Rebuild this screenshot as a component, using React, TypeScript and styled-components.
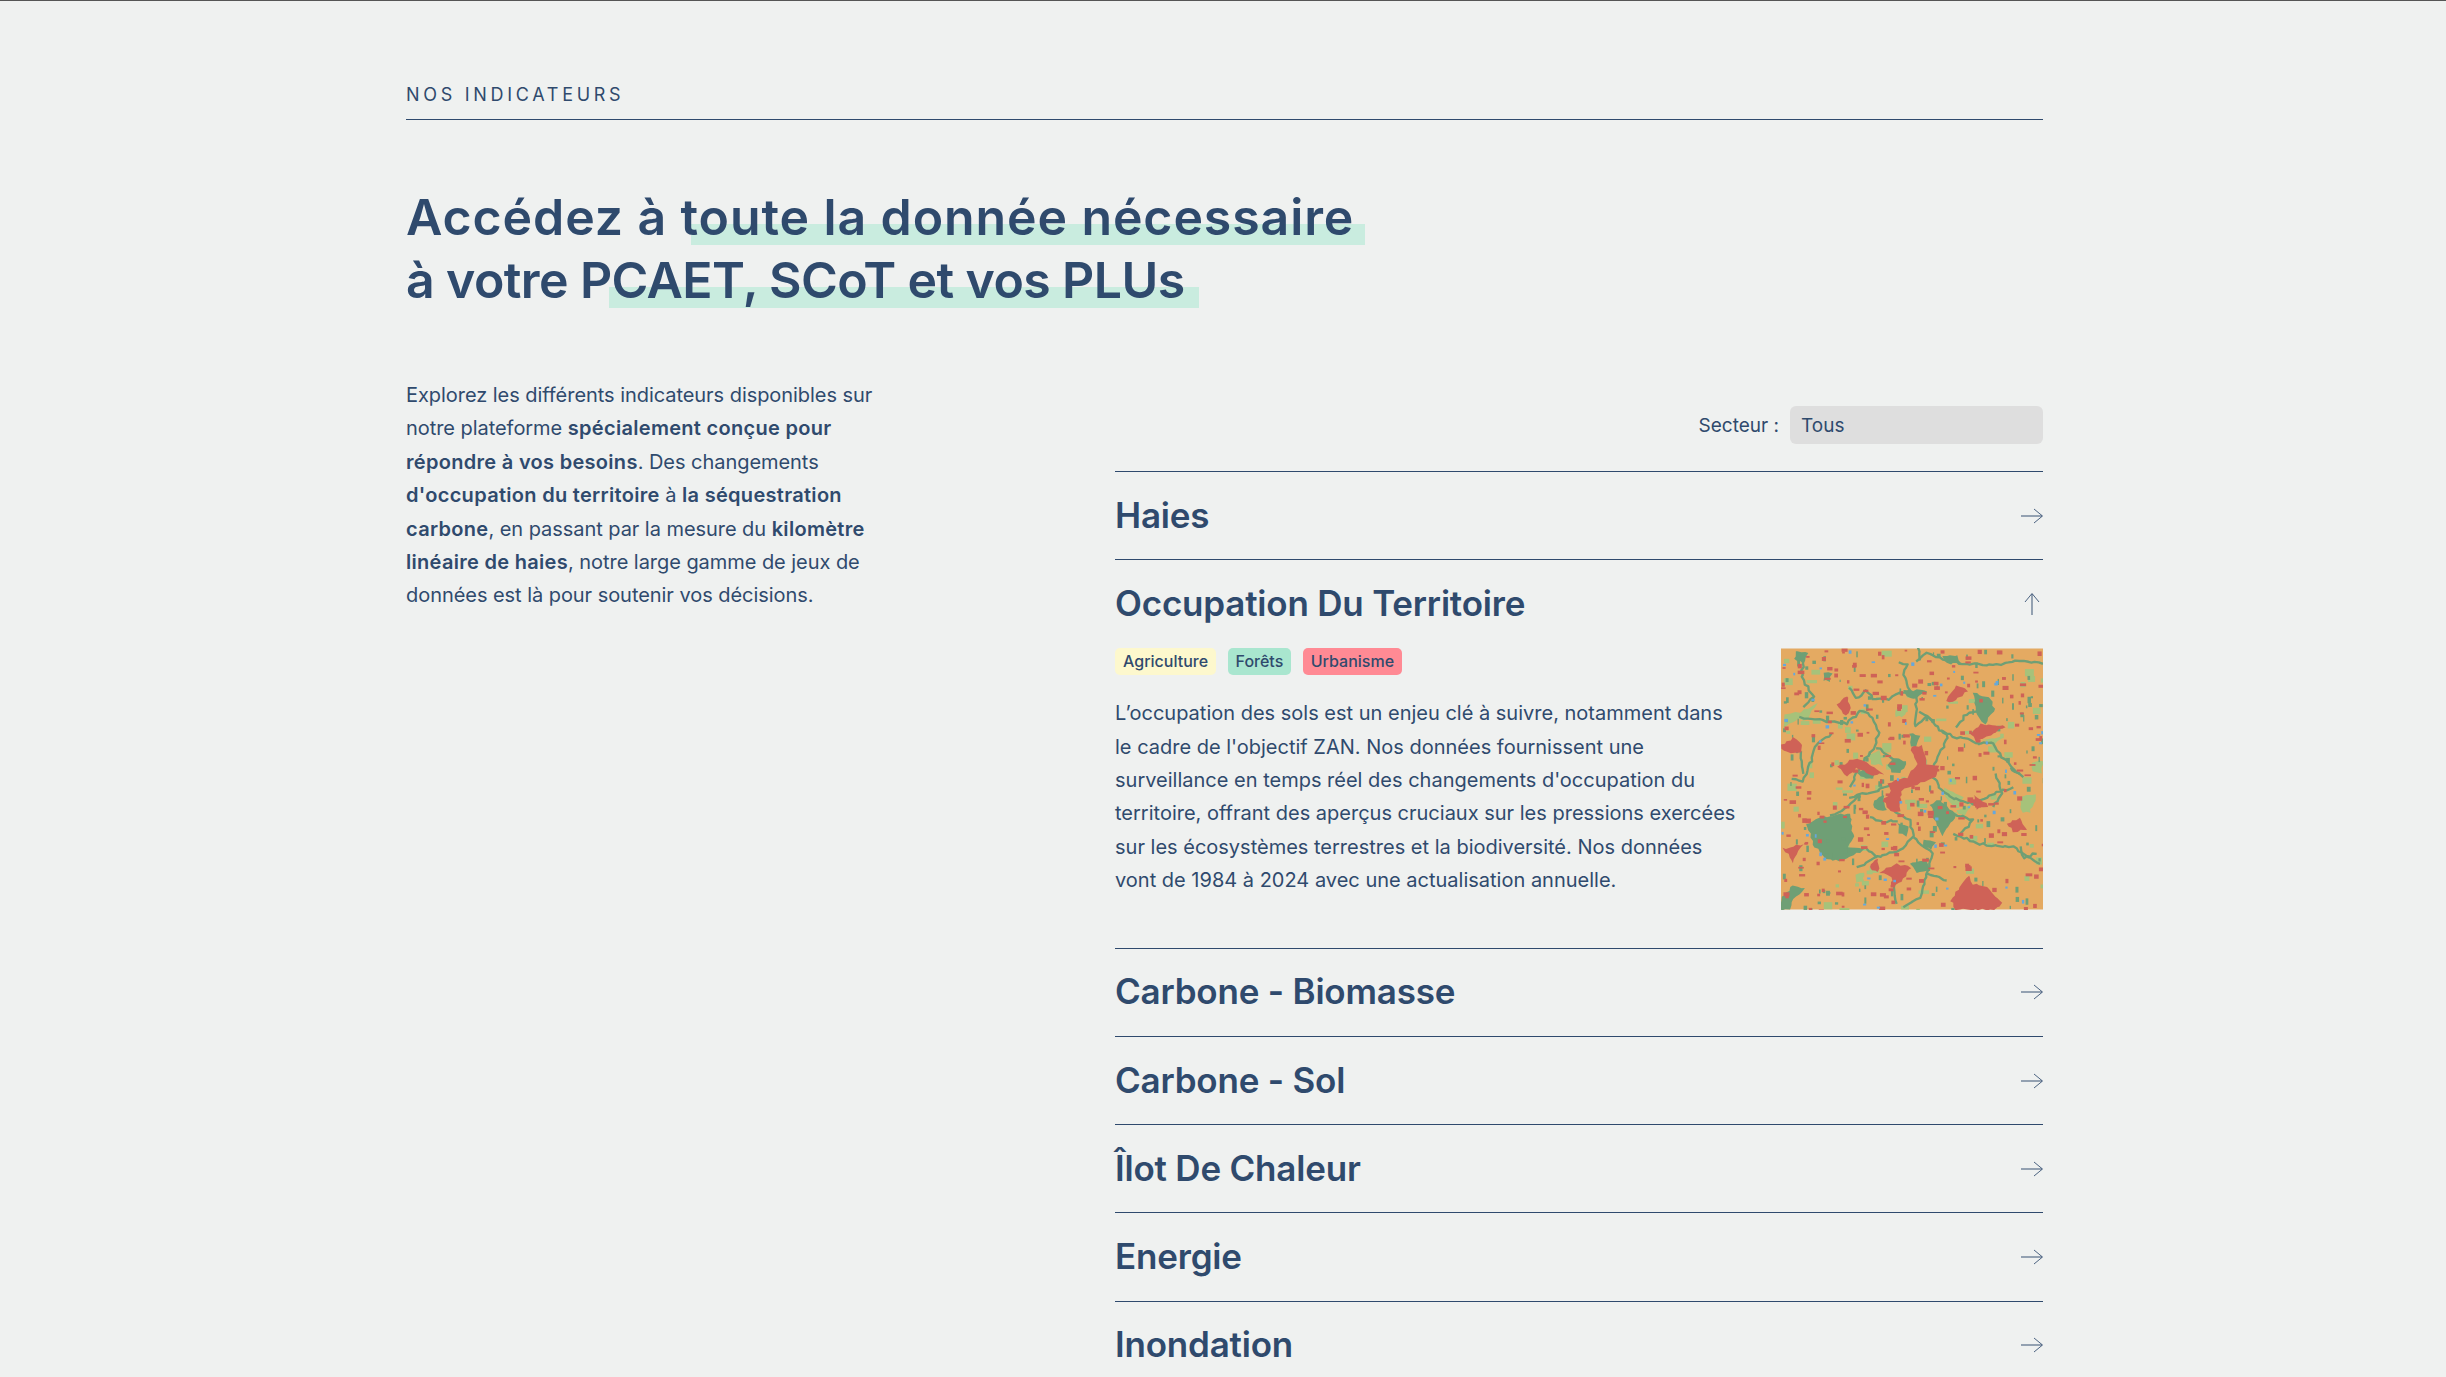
import styled, { createGlobalStyle } from "styled-components";

const ink = "#2f4a6d";

const GlobalStyle = createGlobalStyle`
  html, body {
    margin: 0;
    height: 1377px;
    overflow: hidden;
    background: #eff1f0;
  }
  body {
    font-family: Inter, "Liberation Sans", sans-serif;
    color: ${ink};
  }
`;

const Page = styled.main`
  border-top: 1px solid #555;
  padding: 0 403px 0 406px;
`;

const Eyebrow = styled.div`
  padding-top: 83px;
  padding-bottom: 13px;
  border-bottom: 1px solid ${ink};
  font-size: 18px;
  line-height: 22px;
  letter-spacing: 3.7px;
  text-transform: uppercase;
`;

const Heading = styled.h1`
  margin: 66px 0 0;
  font-size: 50px;
  line-height: 63px;
  font-weight: 600;
  isolation: isolate;
`;

const HeadingLine = styled.span<{ $from: number; $mark: number; $track: number }>`
  display: table;
  position: relative;
  white-space: nowrap;
  letter-spacing: ${(p) => p.$track}px;

  &::after {
    content: "";
    position: absolute;
    z-index: -1;
    left: ${(p) => p.$from}px;
    width: ${(p) => p.$mark}px;
    top: 38px;
    height: 21px;
    background: #c9ecdf;
  }
`;

const Columns = styled.div`
  display: grid;
  grid-template-columns: 709px 1fr;
  margin-top: 66px;
`;

const Intro = styled.p`
  margin: 0;
  padding-top: 1px;
  font-size: 20px;
  line-height: 33.4px;
  letter-spacing: -0.05px;
  white-space: nowrap;

  strong {
    font-weight: 600;
    letter-spacing: 0.3px;
  }
`;

const Filter = styled.div`
  display: flex;
  justify-content: flex-end;
  align-items: center;
  gap: 11px;
  padding-top: 28px;
  padding-bottom: 27px;
  font-size: 19px;
`;

const Select = styled.select`
  appearance: none;
  width: 253px;
  height: 38px;
  border: 0;
  border-radius: 6px;
  padding: 0 11px;
  background: #dedede;
  color: ${ink};
  font: inherit;
`;

const Row = styled.section`
  border-top: 1px solid ${ink};
`;

const RowHead = styled.div`
  display: flex;
  align-items: center;
  justify-content: space-between;
  height: 87.3px;
`;

const RowTitle = styled.h2`
  margin: 0 0 2px;
  font-size: 35px;
  font-weight: 600;
  letter-spacing: -0.2px;
`;

const RowBody = styled.div`
  display: flex;
  justify-content: space-between;
  padding-bottom: 38px;
`;

const RowCopy = styled.div`
  display: flex;
  flex-direction: column;
  gap: 22.5px;
`;

const Tags = styled.div`
  display: flex;
  gap: 11.5px;
`;

const Tag = styled.span<{ $bg: string }>`
  display: flex;
  align-items: center;
  height: 27px;
  padding: 0 8px;
  border-radius: 5px;
  background: ${(p) => p.$bg};
  font-size: 16px;
  font-weight: 500;
`;

const RowText = styled.p`
  margin: 0;
  font-size: 20px;
  line-height: 33.4px;
  white-space: nowrap;
`;

const MapFrame = styled.svg`
  display: block;
  width: 262px;
  height: 262px;
  flex: none;
  filter: blur(0.35px);
`;

const ArrowIcon = ({ up = false }: { up?: boolean }) => (
  <svg width="22" height="22" viewBox="0 0 22 22" fill="none">
    <g transform={up ? "rotate(-90 11 11)" : undefined}>
      <path d="M0 11H21" stroke={ink} strokeOpacity="0.6" strokeWidth="1.6" />
      <path d="M13 4L21.5 11L13 18" stroke={ink} strokeOpacity="0.85" strokeWidth="1" />
    </g>
  </svg>
);

// small seeded generator so the map stays the same on every load
const makeRandom = (seed: number) => () => {
  seed = (seed + 0x6d2b79f5) | 0;
  let t = Math.imul(seed ^ (seed >>> 15), 1 | seed);
  t = (t + Math.imul(t ^ (t >>> 7), 61 | t)) ^ t;
  return ((t ^ (t >>> 14)) >>> 0) / 4294967296;
};

const specks = (seed: number, count: number, min: number, max: number) => {
  const rnd = makeRandom(seed);
  return Array.from({ length: count }, () => ({
    x: 63 + rnd() * 786,
    y: 24 + rnd() * 783,
    w: min + rnd() * (max - min),
    h: min + rnd() * (max - min),
  }));
};

type Pt = [number, number];

// breaks each segment into short steps and pushes them off the line, for the rough edges of the map
const roughen = (pts: Pt[], seed: number, amp: number, closed: boolean) => {
  const rnd = makeRandom(seed);
  const out: Pt[] = [];
  const last = closed ? pts.length : pts.length - 1;
  for (let i = 0; i < last; i++) {
    const [ax, ay] = pts[i];
    const [bx, by] = pts[(i + 1) % pts.length];
    const steps = Math.max(1, Math.round(Math.hypot(bx - ax, by - ay) / 11));
    for (let s = 0; s < steps; s++) {
      const k = s / steps;
      out.push([ax + (bx - ax) * k + (rnd() - 0.5) * amp, ay + (by - ay) * k + (rnd() - 0.5) * amp]);
    }
  }
  if (!closed) out.push(pts[pts.length - 1]);
  return out.map((p) => p.map((n) => n.toFixed(1)).join(",")).join(" ");
};

const parse = (s: string) => s.split(" ").map((p) => p.split(",").map(Number) as Pt);

const RED = "#cf6257";
const GREEN = "#6f9f75";
const LIGHT = "#a6c27a";
const BLUE = "#66a8dc";

const redSpecks = specks(11, 240, 7, 20);
const greenSpecks = specks(23, 170, 6, 20);
const lightSpecks = specks(37, 80, 10, 32);
const blueSpecks = specks(51, 50, 5, 11);

const greenBlobs = [
  "140,550 190,530 240,522 270,518 280,590 262,620 320,625 240,662 190,650 160,610",
  "63,770 100,735 132,745 95,785 88,807 63,807",
  "510,490 540,478 585,520 578,540 545,585 520,530",
  "640,155 690,170 705,205 675,250 650,225",
  "380,370 410,350 440,365 420,400 395,395",
  "295,395 320,388 345,405 320,416 300,410",
  "415,545 445,560 440,585 415,580",
  "105,35 145,35 130,70 105,55",
  "190,98 215,98 210,122 190,120",
  "450,280 480,285 470,320 450,315",
  "550,48 595,45 600,70 560,70",
  "430,150 495,148 470,172 440,170",
  "340,480 370,465 380,510 345,505",
  "450,670 500,660 510,690 470,700",
  "490,595 525,605 515,630 490,620",
];

const lightBlobs = [
  "130,210 170,190 140,240 110,235",
  "320,340 360,330 370,375 335,370",
  "405,205 440,210 425,230 405,228",
  "550,440 610,470 590,500 555,470",
  "590,510 640,490 610,530",
  "780,470 830,460 810,520 780,510",
  "815,370 849,360 845,400 820,395",
  "290,700 310,695 310,725 290,725",
  "70,220 130,215 100,245 70,260",
  "670,295 730,290 700,318",
];

const redBlobs = [
  "385,430 440,410 470,370 452,322 485,312 500,370 535,378 525,410 470,432 425,450 420,512 395,512 368,482 395,452",
  "570,780 600,740 625,705 640,730 680,740 730,790 700,807 590,807",
  "232,378 290,352 328,372 370,400 340,405 290,385 262,408",
  "63,312 100,292 128,308 125,338 90,335 63,325",
  "635,280 665,250 740,258 690,285 650,302",
  "560,180 590,132 625,152 595,170 580,185",
  "232,195 258,165 272,205 258,225",
  "360,695 410,670 452,682 430,715 400,740 395,710",
  "645,460 685,498 650,505",
  "740,550 780,535 800,570 760,572",
  "70,625 130,610 110,640 100,668 85,640",
  "330,670 355,655 355,695 335,690",
];

const greenLines = [
  "120,230 190,240 260,250 300,210 325,215 355,275 345,320 310,360 270,440",
  "270,140 290,175 320,150 340,175 385,175 420,160 500,155",
  "415,65 440,70 430,100 450,150",
  "470,60 500,40 560,60 620,70 700,75 780,60 849,70",
  "470,150 465,260 500,225 540,270 590,290 650,305 700,310 725,350 780,400",
  "480,215 520,240",
  "590,260 620,220 690,200",
  "540,270 565,290 540,340 510,400 540,440 570,470 640,490 700,460 760,440",
  "215,280 170,310 150,370 130,420 95,415",
  "120,330 130,400",
  "270,470 350,450 395,430",
  "400,510 450,540 460,590 420,630 350,650 290,680",
  "460,590 520,640 500,700 480,770 430,800",
  "350,650 320,625",
  "580,580 660,610 760,620 840,670",
  "350,320 420,370",
  "410,540 370,545 330,530",
  "470,0 480,60",
  "710,400 725,460 700,500",
  "750,380 790,410",
  "130,60 125,110 160,170 130,200",
  "400,720 410,790",
  "500,700 560,720",
  "780,620 790,650 830,640",
  "600,580 640,540 580,520",
  "300,465 245,510 210,525",
];

const MapLayer = ({ data, fill, seed }: { data: string[]; fill: string; seed: number }) => (
  <>
    {data.map((p, i) => (
      <polygon key={i} points={roughen(parse(p), seed + i, 7, true)} fill={fill} />
    ))}
  </>
);

const IndicatorMap = () => (
  <MapFrame viewBox="63 24 786 783">
    <rect x="63" y="24" width="786" height="783" fill="#e4aa62" />
    {lightSpecks.map((s, i) => (
      <rect key={i} x={s.x} y={s.y} width={s.w} height={s.h * 0.7} fill={LIGHT} />
    ))}
    <MapLayer data={lightBlobs} fill={LIGHT} seed={300} />
    {greenLines.map((p, i) => (
      <polyline
        key={i}
        points={roughen(parse(p), 100 + i, 7, false)}
        fill="none"
        stroke={GREEN}
        strokeWidth="7"
        strokeLinejoin="round"
      />
    ))}
    <MapLayer data={greenBlobs} fill={GREEN} seed={500} />
    {greenSpecks.map((s, i) => (
      <rect key={i} x={s.x} y={s.y} width={s.w * 0.6} height={s.h} fill={GREEN} />
    ))}
    {redSpecks.map((s, i) => (
      <rect key={i} x={s.x} y={s.y} width={s.w} height={s.h * 0.7} fill={RED} />
    ))}
    <MapLayer data={redBlobs} fill={RED} seed={700} />
    {blueSpecks.map((s, i) => (
      <rect key={i} x={s.x} y={s.y} width={s.w} height={s.h} fill={BLUE} />
    ))}
  </MapFrame>
);

const closedAfter = ["Carbone - Biomasse", "Carbone - Sol", "Îlot De Chaleur", "Energie", "Inondation"];

export default function App() {
  return (
    <Page>
      <GlobalStyle />
      <Eyebrow>Nos indicateurs</Eyebrow>
      <Heading>
        <HeadingLine $from={285} $mark={674} $track={0.9}>
          Accédez à toute la donnée nécessaire
        </HeadingLine>
        <HeadingLine $from={203} $mark={590} $track={-0.6}>
          à votre PCAET, SCoT et vos PLUs
        </HeadingLine>
      </Heading>
      <Columns>
        <Intro>
          Explorez les différents indicateurs disponibles sur
          <br />
          notre plateforme <strong>spécialement conçue pour</strong>
          <br />
          <strong>répondre à vos besoins</strong>. Des changements
          <br />
          <strong>d'occupation du territoire</strong> à <strong>la séquestration</strong>
          <br />
          <strong>carbone</strong>, en passant par la mesure du <strong>kilomètre</strong>
          <br />
          <strong>linéaire de haies</strong>, notre large gamme de jeux de
          <br />
          données est là pour soutenir vos décisions.
        </Intro>
        <div>
          <Filter>
            Secteur :
            <Select defaultValue="Tous">
              <option>Tous</option>
            </Select>
          </Filter>
          <Row>
            <RowHead>
              <RowTitle>Haies</RowTitle>
              <ArrowIcon />
            </RowHead>
          </Row>
          <Row>
            <RowHead>
              <RowTitle>Occupation Du Territoire</RowTitle>
              <ArrowIcon up />
            </RowHead>
            <RowBody>
              <RowCopy>
                <Tags>
                  <Tag $bg="#fdf8cd">Agriculture</Tag>
                  <Tag $bg="#a9e6cf">Forêts</Tag>
                  <Tag $bg="#ff8a94">Urbanisme</Tag>
                </Tags>
                <RowText>
                  L’occupation des sols est un enjeu clé à suivre, notamment dans
                  <br />
                  le cadre de l'objectif ZAN. Nos données fournissent une
                  <br />
                  surveillance en temps réel des changements d'occupation du
                  <br />
                  territoire, offrant des aperçus cruciaux sur les pressions exercées
                  <br />
                  sur les écosystèmes terrestres et la biodiversité. Nos données
                  <br />
                  vont de 1984 à 2024 avec une actualisation annuelle.
                </RowText>
              </RowCopy>
              <IndicatorMap />
            </RowBody>
          </Row>
          {closedAfter.map((title) => (
            <Row key={title}>
              <RowHead>
                <RowTitle>{title}</RowTitle>
                <ArrowIcon />
              </RowHead>
            </Row>
          ))}
        </div>
      </Columns>
    </Page>
  );
}
